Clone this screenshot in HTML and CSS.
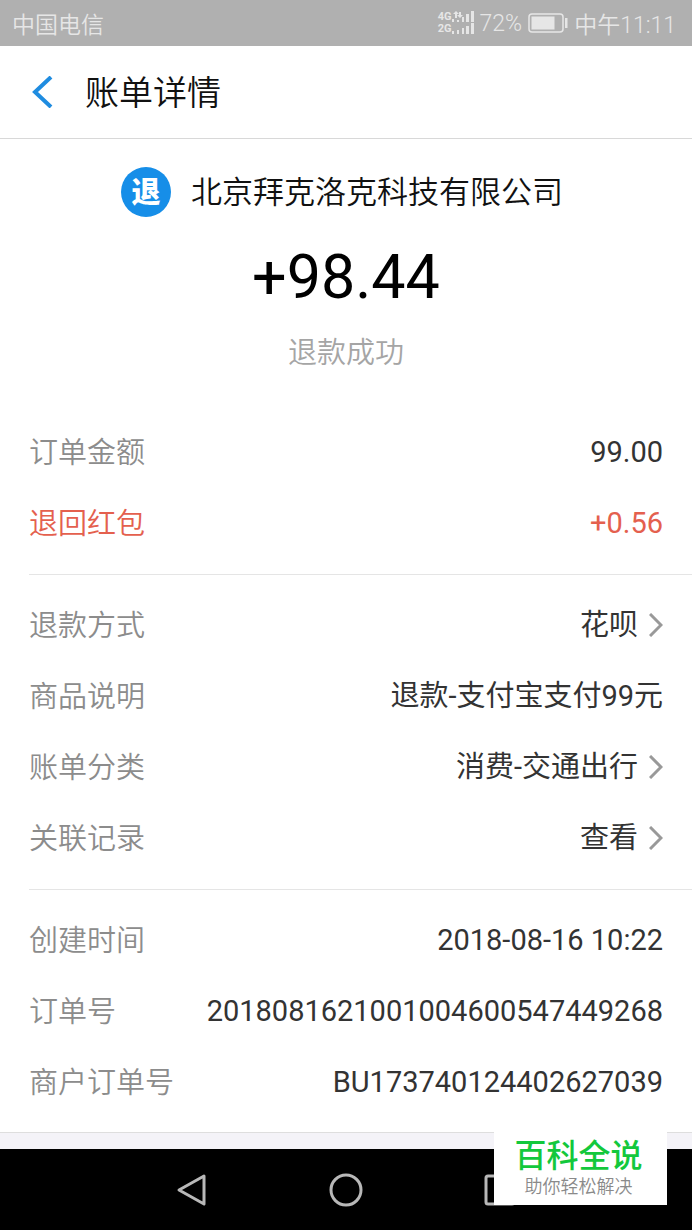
FILE: index.html
```html
<!DOCTYPE html>
<html lang="zh-CN">
  <head>
    <meta charset="UTF-8" />
    <meta name="viewport" content="width=device-width, initial-scale=1" />
    <title>账单详情</title>
    <link rel="stylesheet" href="styles.css">
  </head>
  <body>
    <div class="status-bar">
      <span>中国电信</span>
      <div class="status-right">
        <div class="network">
          <div class="net-labels"><span>4G</span><span>2G</span></div>
          <svg width="22" height="24" viewBox="0 0 22 24" fill="#e6e6e6">
            <path d="M4 0l3 3H5v4H3V3H1zM8 7L5 4h2V1h2v3h2z" />
            <path d="M0 8h2v3H0zM5 9h2v2H5zM10 6h2v5h-2zM14 3h3v8h-3zM19 0h3v11h-3z" />
            <path d="M0 20h2v3H0zM5 19h2v4H5zM10 17h2v6h-2zM14 15h3v8h-3zM19 12h3v11h-3z" />
          </svg>
        </div>
        <span>72%</span>
        <svg class="battery" width="40" height="20" viewBox="0 0 40 20">
          <rect x="1" y="1" width="34" height="18" rx="3" fill="none" stroke="#e6e6e6" stroke-width="1.5" />
          <rect x="3.5" y="3.5" width="23" height="13" fill="#e6e6e6" />
          <rect x="37" y="5" width="2.5" height="10" fill="#e6e6e6" />
        </svg>
        <span>中午11:11</span>
      </div>
    </div>

    <header class="title-bar">
      <button type="button" class="back" aria-label="返回">
        <svg width="22" height="32" viewBox="0 0 22 32">
          <path d="M20 1L4 16l16 15" fill="none" stroke="#1f8ce0" stroke-width="4" />
        </svg>
      </button>
      <h1>账单详情</h1>
    </header>

    <main>
      <section class="summary">
        <div class="merchant">
          <span class="badge">退</span>
          <h2>北京拜克洛克科技有限公司</h2>
        </div>
        <p class="amount">+98.44</p>
        <p class="state">退款成功</p>
      </section>

      <dl class="group">
        <div class="row"><dt>订单金额</dt><dd>99.00</dd></div>
        <div class="row red"><dt>退回红包</dt><dd>+0.56</dd></div>
      </dl>

      <dl class="group">
        <div class="row">
          <dt>退款方式</dt>
          <dd><a href="#">花呗<svg width="14" height="24" viewBox="0 0 14 24"><path d="M1 1l11 11L1 23" /></svg></a></dd>
        </div>
        <div class="row"><dt>商品说明</dt><dd>退款-支付宝支付99元</dd></div>
        <div class="row">
          <dt>账单分类</dt>
          <dd><a href="#">消费-交通出行<svg width="14" height="24" viewBox="0 0 14 24"><path d="M1 1l11 11L1 23" /></svg></a></dd>
        </div>
        <div class="row">
          <dt>关联记录</dt>
          <dd><a href="#">查看<svg width="14" height="24" viewBox="0 0 14 24"><path d="M1 1l11 11L1 23" /></svg></a></dd>
        </div>
      </dl>

      <dl class="group">
        <div class="row"><dt>创建时间</dt><dd>2018-08-16 10:22</dd></div>
        <div class="row"><dt>订单号</dt><dd>2018081621001004600547449268</dd></div>
        <div class="row"><dt>商户订单号</dt><dd>BU173740124402627039</dd></div>
      </dl>
    </main>

    <div class="page-end"></div>

    <nav class="nav-bar">
      <button type="button" aria-label="后退">
        <svg width="34" height="34" viewBox="0 0 34 34"><path d="M29 3L4 17l25 14z" /></svg>
      </button>
      <button type="button" aria-label="主屏幕">
        <svg width="34" height="34" viewBox="0 0 34 34"><circle cx="17" cy="17" r="15" /></svg>
      </button>
      <button type="button" aria-label="最近任务">
        <svg width="34" height="34" viewBox="0 0 34 34"><rect x="3" y="3" width="28" height="28" rx="2" /></svg>
      </button>
    </nav>

    <div class="watermark">
      <strong>百科全说</strong>
      <span>助你轻松解决</span>
    </div>
  </body>
</html>
```
FILE: styles.css
```css
* {
  box-sizing: border-box;
}
body {
  margin: 0;
  min-height: 100vh;
  display: flex;
  flex-direction: column;
  position: relative;
  background: #fff;
  color: #333;
  font-family: Roboto, "Noto Sans CJK SC", sans-serif;
}
h1,
h2,
p,
dl,
dd {
  margin: 0;
  font-weight: normal;
}
button {
  padding: 0;
  border: none;
  background: none;
  cursor: pointer;
}
svg {
  display: block;
}

.status-bar {
  display: flex;
  align-items: center;
  justify-content: space-between;
  height: 46px;
  padding: 0 16px 0 12px;
  background: #b0b0b0;
  color: #e6e6e6;
  font-size: 23px;
  font-weight: 350;
}
.status-right {
  display: flex;
  align-items: center;
  gap: 6px;
}
.network {
  display: flex;
  align-items: center;
}
.net-labels {
  display: flex;
  flex-direction: column;
  font-size: 11px;
  font-weight: bold;
  line-height: 12px;
}

.title-bar {
  display: flex;
  align-items: center;
  gap: 32px;
  height: 93px;
  padding: 0 31px;
  border-bottom: 1px solid #d8d8d8;
}
.title-bar h1 {
  padding-top: 2px;
  color: #111;
  font-size: 34px;
  font-weight: 350;
  line-height: 48px;
}

.summary {
  padding: 28px 16px 41px;
  text-align: center;
}
.merchant {
  display: flex;
  align-items: center;
  justify-content: center;
  gap: 20px;
  padding-right: 8px;
}
.badge {
  width: 50px;
  height: 50px;
  border-radius: 50%;
  background: #168ee8;
  color: #fff;
  font-size: 29px;
  font-weight: 900;
  line-height: 53px;
}
.merchant h2 {
  padding-top: 2px;
  color: #111;
  font-size: 31px;
  font-weight: 350;
  line-height: 48px;
}
.amount {
  margin-top: 20px;
  color: #000;
  font-size: 61px;
  line-height: 80px;
}
.state {
  margin-top: 14px;
  color: #a5a5a5;
  font-size: 29px;
  font-weight: 350;
  line-height: 44px;
}

.group {
  padding: 14px 0 16px;
  margin-left: 29px;
  border-bottom: 1px solid #e5e5e5;
}
.group:first-of-type {
  padding-top: 0;
}
.group:last-of-type {
  padding-bottom: 15px;
  border-bottom: none;
}
.row {
  display: flex;
  align-items: center;
  justify-content: space-between;
  height: 71px;
  padding-right: 29px;
  font-size: 29px;
  font-weight: 350;
  line-height: 40px;
}
.row dt {
  padding-top: 2px;
  color: #8c8c8c;
}
.row.red dt,
.row.red dd {
  color: #e4604e;
}
.row a {
  display: flex;
  align-items: center;
  gap: 11px;
  color: inherit;
  text-decoration: none;
}
.row path {
  fill: none;
  stroke: #999;
  stroke-width: 3;
}

.page-end {
  flex: 1;
  min-height: 17px;
  border-top: 1px solid #dedede;
  background: #f4f3f8;
}
.nav-bar {
  display: flex;
  align-items: center;
  justify-content: center;
  gap: 120px;
  height: 81px;
  background: #000;
}
.nav-bar svg * {
  fill: none;
  stroke: #b8b8b8;
  stroke-width: 3;
  stroke-linejoin: round;
}

.watermark {
  position: absolute;
  right: 25px;
  bottom: 25px;
  display: flex;
  flex-direction: column;
  align-items: center;
  width: 173px;
  height: 73px;
  padding: 5px 4px 0 0;
  background: #fff;
}
.watermark strong {
  color: #13c83c;
  font-size: 32px;
  font-weight: 500;
  line-height: 38px;
}
.watermark span {
  color: #8a8a8a;
  font-size: 18px;
  font-weight: 350;
  line-height: 24px;
}
```
